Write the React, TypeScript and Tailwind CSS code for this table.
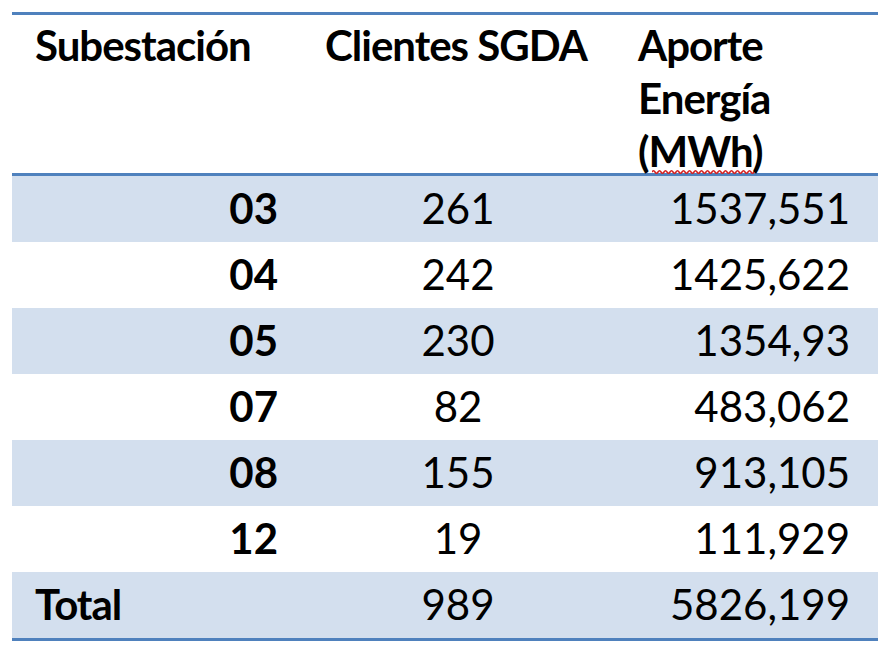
import React from "react";

const rows: { s: string; c: string; e: string; total?: boolean; band: boolean }[] = [
  { s: "03", c: "261", e: "1537,551", band: true },
  { s: "04", c: "242", e: "1425,622", band: false },
  { s: "05", c: "230", e: "1354,93", band: true },
  { s: "07", c: "82", e: "483,062", band: false },
  { s: "08", c: "155", e: "913,105", band: true },
  { s: "12", c: "19", e: "111,929", band: false },
  { s: "Total", c: "989", e: "5826,199", band: true, total: true },
];

export default function App() {
  return (
    <div
      className="w-[888px] h-[654px] bg-white pt-[12px] pl-[12px] text-black"
      style={{ fontFamily: "Lato, 'Open Sans', sans-serif" }}
    >
      <div className="w-[866px] border-t-[3px] border-b-[3px] border-[#4f81bd]">
        <div className="grid grid-cols-[289px_314px_263px] h-[161px] border-b-[3px] border-[#4f81bd] text-[42px] leading-[53px] font-bold tracking-[-1px]">
          <div className="pl-[23px] pt-[4px] whitespace-nowrap">Subestación</div>
          <div className="pl-[24px] pt-[4px] whitespace-nowrap">Clientes SGDA</div>
          <div className="pl-[23px] pt-[4px] whitespace-nowrap">
            <div>Aporte</div>
            <div>Energía</div>
            <div>
              <span className="relative inline-block">
                (MWh)
                <svg
                  className="absolute left-[14px] top-[44px]"
                  width="104"
                  height="5"
                  viewBox="0 0 104 5"
                >
                  <path
                    d="M0 3 Q1.5 0.5 3 3 T6 3 T9 3 T12 3 T15 3 T18 3 T21 3 T24 3 T27 3 T30 3 T33 3 T36 3 T39 3 T42 3 T45 3 T48 3 T51 3 T54 3 T57 3 T60 3 T63 3 T66 3 T69 3 T72 3 T75 3 T78 3 T81 3 T84 3 T87 3 T90 3 T93 3 T96 3 T99 3 T102 3"
                    fill="none"
                    stroke="#d42020"
                    strokeWidth="1.5"
                  />
                </svg>
              </span>
            </div>
          </div>
        </div>
        {rows.map((r) => (
          <div
            key={r.s}
            className={`grid grid-cols-[289px_314px_263px] h-[66px] text-[42px] leading-[54px] ${
              r.band ? "bg-[#d3dfee]" : "bg-white"
            }`}
          >
            <div
              className={`pt-[5px] font-bold ${
                r.total ? "pl-[23px] text-left tracking-[-1px]" : "pr-[23px] text-right"
              }`}
            >
              {r.s}
            </div>
            <div className="pt-[5px] text-center">{r.c}</div>
            <div className="pt-[5px] pr-[28px] text-right">{r.e}</div>
          </div>
        ))}
      </div>
    </div>
  );
}
